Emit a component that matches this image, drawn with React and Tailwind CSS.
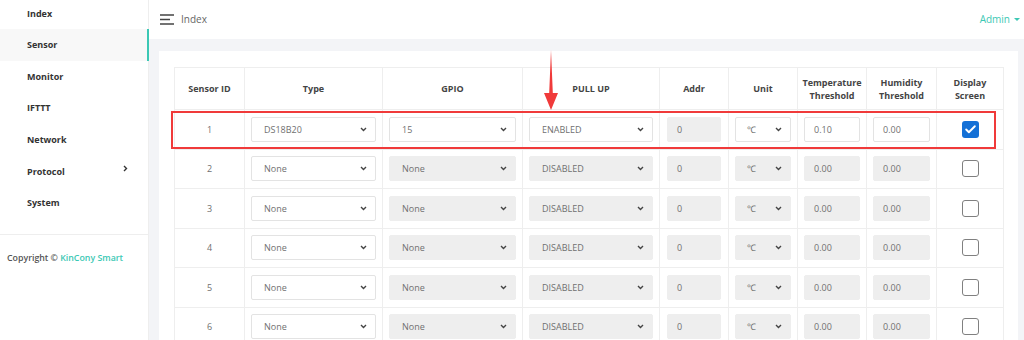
import { Check } from "lucide-react";

const nav = ["Index", "Sensor", "Monitor", "IFTTT", "Network", "Protocol", "System"];

const cols = [
  { label: "Sensor ID", w: "w-[70px]" },
  { label: "Type", w: "w-[138px]" },
  { label: "GPIO", w: "w-[140px]" },
  { label: "PULL UP", w: "w-[137px]" },
  { label: "Addr", w: "w-[69px]" },
  { label: "Unit", w: "w-[69px]" },
  { label: ["Temperature", "Threshold"], w: "w-[69px]" },
  { label: ["Humidity", "Threshold"], w: "w-[70px]" },
  { label: ["Display", "Screen"], w: "w-[67px]" },
];

const rows = [
  { id: 1, type: "DS18B20", gpio: "15", pull: "ENABLED", temp: "0.10", hum: "0.00", on: true },
  { id: 2, type: "None", gpio: "None", pull: "DISABLED", temp: "0.00", hum: "0.00" },
  { id: 3, type: "None", gpio: "None", pull: "DISABLED", temp: "0.00", hum: "0.00" },
  { id: 4, type: "None", gpio: "None", pull: "DISABLED", temp: "0.00", hum: "0.00" },
  { id: 5, type: "None", gpio: "None", pull: "DISABLED", temp: "0.00", hum: "0.00" },
  { id: 6, type: "None", gpio: "None", pull: "DISABLED", temp: "0.00", hum: "0.00" },
];

const Chevron = () => (
  <svg width="7" height="5" viewBox="0 0 7 5" className="shrink-0">
    <path d="M1 1l2.5 2.5L6 1" fill="none" stroke="#444" strokeWidth="1.4" />
  </svg>
);

// faux select box, grey when disabled
const Select = ({ value, disabled, pl = "pl-[12px]" }) => (
  <div
    className={`flex h-[25px] items-center justify-between rounded-[2px] border pr-[8px] ${pl} ${
      disabled ? "border-[#eeeeee] bg-[#eeeeee]" : "border-[#e3e3e3] bg-white"
    }`}
  >
    <span>{value}</span>
    <Chevron />
  </div>
);

const Field = ({ value, disabled }) => (
  <div
    className={`flex h-[25px] items-center rounded-[2px] border pl-[9px] ${
      disabled ? "border-[#eeeeee] bg-[#eeeeee]" : "border-[#e3e3e3] bg-white"
    }`}
  >
    {value}
  </div>
);

export default function App() {
  return (
    <div className="flex h-[340px] w-[1024px] overflow-hidden bg-white font-['Open_Sans',sans-serif]">
      {/* sidebar */}
      <div className="w-[149px] shrink-0 border-r border-[#eeeeee]">
        <div className="-mt-[2.5px]">
          {nav.map((n) => (
            <div
              key={n}
              className={`relative flex h-[31.6px] items-center justify-between pl-[27px] pr-[20px] text-[9px] font-bold text-[#333] ${
                n === "Sensor" ? "bg-[#f8f8f8]" : ""
              }`}
            >
              <span>{n}</span>
              {n === "Protocol" && (
                <svg width="5" height="7" viewBox="0 0 5 7" className="-mt-[6px]">
                  <path d="M1 1l2.5 2.5L1 6" fill="none" stroke="#333" strokeWidth="1.4" />
                </svg>
              )}
              {n === "Sensor" && <div className="absolute right-[-1px] top-0 h-full w-[2px] bg-[#3cc8b4]" />}
            </div>
          ))}
        </div>
        <div className="mt-[15px] border-t border-[#eeeeee] pl-[7px] pt-[17px] text-[8.8px] font-semibold text-[#555]">
          Copyright © <span className="text-[#3cc8b4]">KinCony Smart</span>
        </div>
      </div>

      {/* main */}
      <div className="flex min-w-0 flex-1 flex-col">
        <div className="flex h-[39px] shrink-0 items-center justify-between bg-white pl-[11px] pr-[4px]">
          <div className="flex items-center gap-[7px]">
            <svg width="14" height="11" viewBox="0 0 14 11">
              <path d="M0 1h14M0 5.5h10M0 10h14" stroke="#444" strokeWidth="1.3" />
            </svg>
            <span className="text-[10px] text-[#666]">Index</span>
          </div>
          <div className="flex items-center gap-[4px] text-[10px] text-[#3cc8b4]">
            Admin
            <svg width="6" height="4" viewBox="0 0 6 4">
              <path d="M0 0h6L3 3z" fill="#3cc8b4" />
            </svg>
          </div>
        </div>

        <div className="flex-1 bg-[#f3f4f7] pl-[10px] pt-[12px]">
          <div className="relative w-[859px] bg-white px-[15px] pt-[16px]">
            <table className="w-[829px] table-fixed border-collapse text-[9px] text-[#707070]">
              <thead>
                <tr className="h-[42px]">
                  {cols.map((c, i) => (
                    <th
                      key={i}
                      className={`${c.w} border border-[#eeeeee] text-center font-bold leading-[13px] text-[#444]`}
                    >
                      {Array.isArray(c.label) ? (
                        <>
                          {c.label[0]}
                          <br />
                          {c.label[1]}
                        </>
                      ) : (
                        c.label
                      )}
                    </th>
                  ))}
                </tr>
              </thead>
              <tbody>
                {rows.map((r) => {
                  const off = !r.on;
                  return (
                    <tr key={r.id} className="h-[39.5px]">
                      <td className="border border-[#eeeeee] text-center">{r.id}</td>
                      <td className="border border-[#eeeeee] px-[6px]">
                        <Select value={r.type} />
                      </td>
                      <td className="border border-[#eeeeee] px-[6px]">
                        <Select value={r.gpio} disabled={off} />
                      </td>
                      <td className="border border-[#eeeeee] px-[6px]">
                        <Select value={r.pull} disabled={off} />
                      </td>
                      <td className="border border-[#eeeeee] px-[7px]">
                        <Field value="0" disabled />
                      </td>
                      <td className="border border-[#eeeeee] px-[6px]">
                        <Select value="℃" disabled={off} pl="pl-[11px]" />
                      </td>
                      <td className="border border-[#eeeeee] px-[6px]">
                        <Field value={r.temp} disabled={off} />
                      </td>
                      <td className="border border-[#eeeeee] px-[6px]">
                        <Field value={r.hum} disabled={off} />
                      </td>
                      <td className="border border-[#eeeeee]">
                        {r.on ? (
                          <div className="mx-auto flex h-[17px] w-[17px] items-center justify-center rounded-[3px] bg-[#1470d6]">
                            <Check size={13} color="white" strokeWidth={3.5} />
                          </div>
                        ) : (
                          <div className="mx-auto h-[17px] w-[17px] rounded-[3px] border-[1.5px] border-[#808080]" />
                        )}
                      </td>
                    </tr>
                  );
                })}
              </tbody>
            </table>

            {/* red highlight annotation */}
            <div className="absolute left-[12px] top-[60px] h-[38px] w-[825px] border-2 border-[#f03a3a]" />
            <svg width="16" height="60" viewBox="0 0 16 60" className="absolute left-[384px] top-[-1px]">
              <path d="M8 0L9.8 43H15L8 60L1 43H6.2Z" fill="#f03a3a" />
            </svg>
          </div>
        </div>
      </div>
    </div>
  );
}
